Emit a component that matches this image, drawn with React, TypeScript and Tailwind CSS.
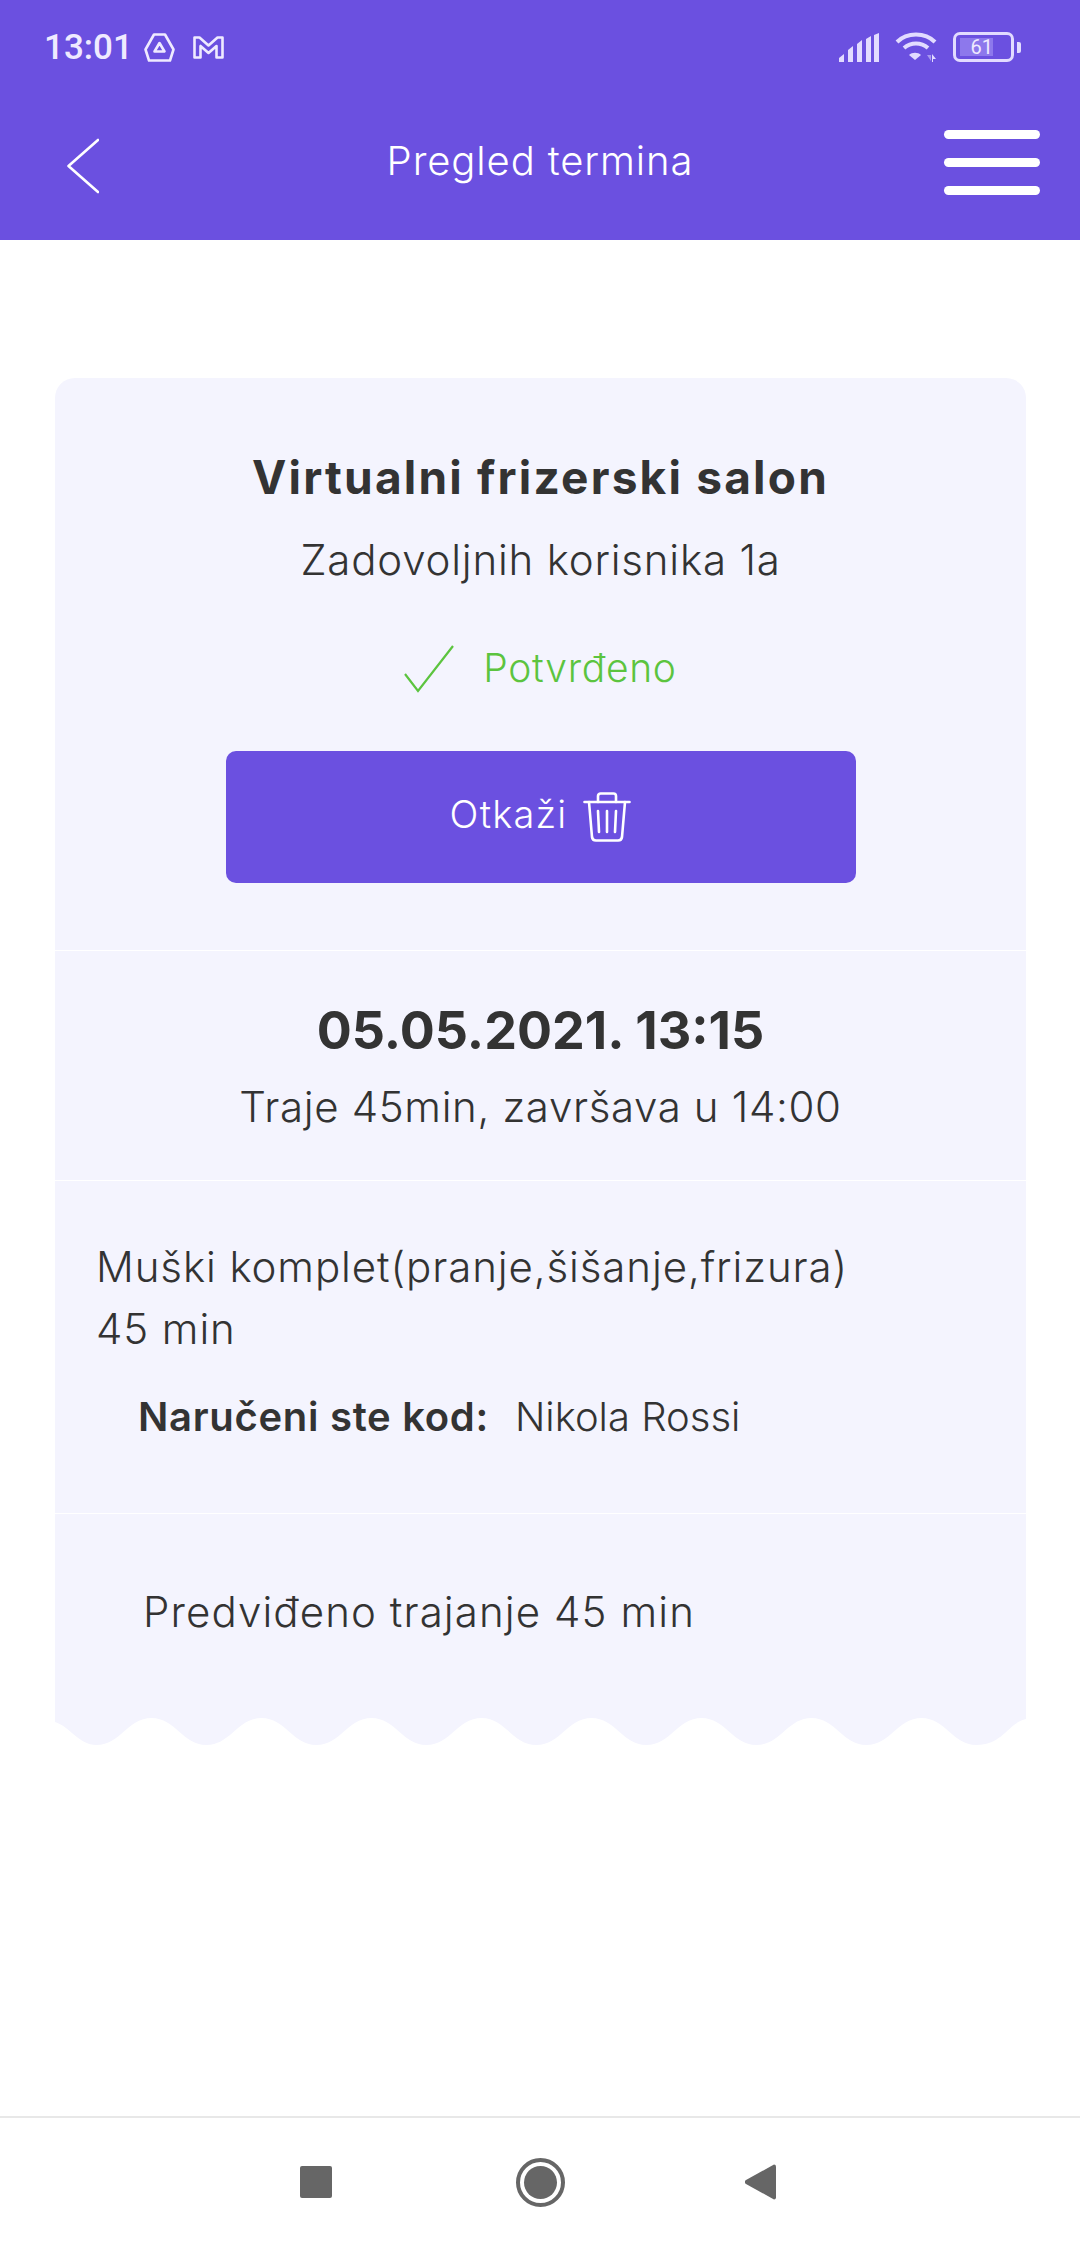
const wavePath = () => {
  // card bottom edge: crests every 110px, first trough at x=41.5
  let d = 'M0 0 L0 4 C14 8 24 27 41.5 27'
  for (let x = 41.5; x < 900; x += 110) {
    d += ` C${x + 24} 27 ${x + 31} 0 ${x + 55} 0`
    d += ` C${x + 79} 0 ${x + 86} 27 ${x + 110} 27`
  }
  return d + ' C948 27 953 5 971 1 L971 0 Z'
}

function StatusBar() {
  return (
    <div className="flex h-[94px] items-center justify-between pl-[44px] pr-[59px] text-[#efeaff]">
      <div className="flex items-center">
        <span className="font-['Roboto',sans-serif] text-[35px] font-medium leading-none">13:01</span>
        <svg className="ml-[11px]" width="31" height="29" viewBox="0 0 31 29" fill="none" stroke="currentColor" strokeWidth="2.6" strokeLinejoin="round">
          <path d="M10 1.5h11l8.5 15-3.5 11H5l-3.5-11z" />
          <path d="M15.5 10l5 8.5h-10z" />
        </svg>
        <svg className="ml-[18px]" width="31" height="23" viewBox="0 0 31 23" fill="none" stroke="currentColor" strokeWidth="2.6" strokeLinejoin="round">
          <path d="M1.5 1.5h5l9 8 9-8h5v20h-6V10l-8 7-8-7v11.5h-6z" />
        </svg>
      </div>
      <div className="flex items-center">
        <svg width="40" height="29" viewBox="0 0 40 29" fill="#e2dbff">
          <path d="M0 29v-4l5-4v8zM9 29V17l5-4v16zM18 29V11l5-4v22zM27 29V6l5-3v26zM35 29V2l5-2v29z" />
        </svg>
        <svg className="ml-[16px]" width="42" height="30" viewBox="0 0 42 30" fill="none" stroke="#e2dbff" strokeWidth="4">
          <path d="M2 10C12 0 30 0 40 10" />
          <path d="M9 16c7-6 17-6 24 0" />
          <path d="M20 28l-6-5c3-3 9-3 12 0z" fill="#e2dbff" stroke="none" />
          <path d="M32 23h4v6z" fill="#a99af0" stroke="none" />
          <path d="M37 30v-8l4 5h-3v3z" fill="#e2dbff" stroke="none" />
        </svg>
        <div className="ml-[16px] flex h-[30px] w-[61px] items-center rounded-[7px] border-[3px] border-[#e2dbff] px-[4px]">
          <div className="flex h-[18px] w-[33px] items-center justify-end bg-[#8d78ec]">
            <span className="font-['Roboto',sans-serif] text-[20px] leading-none text-[#efeaff]">61</span>
          </div>
        </div>
        <div className="ml-[3px] h-[11px] w-[4px] rounded-r-[2px] bg-[#e2dbff]" />
      </div>
    </div>
  )
}

function NavBar() {
  return (
    <div className="grid h-[146px] grid-cols-[1fr_auto_1fr] items-start">
      <div className="pl-[67px] pt-[44px]">
        <svg width="32" height="56" viewBox="0 0 32 56" fill="none" stroke="#fff" strokeWidth="2.6" strokeLinecap="round" strokeLinejoin="round">
          <path d="M31 2L1.5 28 31 54" />
        </svg>
      </div>
      <h1 className="pt-[42px] font-['Inter',sans-serif] text-[40px] font-light leading-[50px] tracking-[0.9px] text-white">Pregled termina</h1>
      <div className="flex justify-end pr-[40px] pt-[36px]">
        <div className="flex w-[96px] flex-col gap-[19px]">
          <div className="h-[9px] rounded-full bg-white" />
          <div className="h-[9px] rounded-full bg-white" />
          <div className="h-[9px] rounded-full bg-white" />
        </div>
      </div>
    </div>
  )
}

function TrashIcon() {
  return (
    <svg width="48" height="50" viewBox="0 0 48 50" fill="none" stroke="#fff" strokeWidth="2.6" strokeLinecap="round" strokeLinejoin="round">
      <path d="M1.5 10h45" />
      <path d="M15 10V4a2.5 2.5 0 0 1 2.5-2.500h13A2.500 2.500 0 0 1 33 4v6" />
      <path d="M6 10l3 35a4 4 0 0 0 4 3.500h22a4 4 0 0 0 4-3.500l3-35" />
      <path d="M15 19l1 21M24 19v21M33 19l-1 21" />
    </svg>
  )
}

export default function App() {
  return (
    <div className="flex min-h-[2246px] flex-col bg-white font-['Inter',sans-serif] text-[#333]">
      <header className="bg-[#6b50e0]">
        <StatusBar />
        <NavBar />
      </header>

      <main className="flex-1 px-[55px] pt-[138px] pr-[54px]">
        <div className="rounded-t-[20px] bg-[#f4f4fe]">
          {/* Salon */}
          <section className="flex h-[573px] flex-col items-center border-b border-white pt-[75px]">
            <h2 className="text-[46px] font-bold leading-[48px] tracking-[2.2px]">Virtualni frizerski salon</h2>
            <p className="mt-[35px] text-[42px] font-light leading-[48px] tracking-[0.8px]">Zadovoljnih korisnika 1a</p>
            <div className="mt-[61px] flex items-center">
              <svg width="50" height="48" viewBox="0 0 50 48" fill="none" stroke="#5cc43f" strokeWidth="2.2">
                <path d="M1 29l13 17L49 1" />
              </svg>
              <span className="ml-[29px] -mt-[2px] text-[39px] font-light leading-[48px] tracking-[0.7px] text-[#5cc43f]">Potvrđeno</span>
            </div>
            <button className="mt-[58px] flex h-[132px] w-[630px] items-center justify-center gap-[16px] rounded-[10px] bg-[#6b50e0]">
              <span className="pb-[6px] text-[38px] font-light tracking-[1.2px] text-white">Otkaži</span>
              <TrashIcon />
            </button>
          </section>

          {/* Termin */}
          <section className="flex h-[230px] flex-col items-center border-b border-white pt-[50px]">
            <div className="text-[52px] font-bold leading-[60px]">05.05.2021. 13:15</div>
            <div className="mt-[22px] text-[42px] font-light leading-[48px] tracking-[0.65px]">Traje 45min, završava u 14:00</div>
          </section>

          {/* Usluga */}
          <section className="h-[333px] border-b border-white pl-[41px] pt-[55px] text-[42px] font-light leading-[62px] tracking-[0.9px]">
            <p>Muški komplet(pranje,šišanje,frizura)</p>
            <p>45 min</p>
            <div className="mt-[33px] flex items-center pl-[42px] text-[40px] leading-[48px] tracking-normal">
              <span className="font-semibold tracking-[0.7px]">Naručeni ste kod:</span>
              <span className="ml-[26px]">Nikola Rossi</span>
            </div>
          </section>

          <section className="h-[204px] pl-[88px] pt-[74px] text-[42px] font-light leading-[48px] tracking-[1.1px]">
            Predviđeno trajanje 45 min
          </section>
        </div>
        <svg className="block" width="971" height="27" viewBox="0 0 971 27" fill="#f4f4fe">
          <path d={wavePath()} />
        </svg>
      </main>

      <footer className="flex h-[130px] items-center border-t-2 border-[#e8e8e8] pl-[300px]">
        <div className="h-[32px] w-[32px] rounded-[2px] bg-[#666]" />
        <div className="ml-[184px] flex h-[49px] w-[49px] items-center justify-center rounded-full border-[4px] border-[#666]">
          <div className="h-[33px] w-[33px] rounded-full bg-[#666]" />
        </div>
        <svg className="ml-[180px]" width="31" height="36" viewBox="0 0 31 36" fill="#666">
          <path d="M29 0.500a2 2 0 0 1 2 2v31a2 2 0 0 1-2 2L1 20a2.300 2.300 0 0 1 0-4z" />
        </svg>
      </footer>
    </div>
  )
}
